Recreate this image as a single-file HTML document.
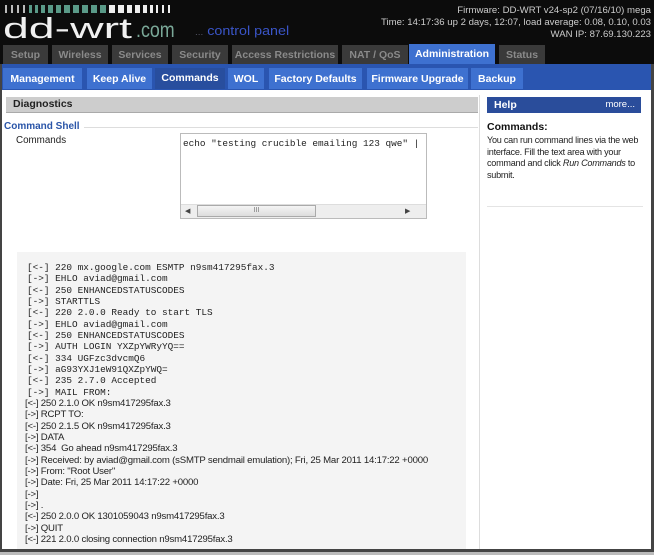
<!DOCTYPE html>
<html><head><meta charset="utf-8"><style>
*{margin:0;padding:0;box-sizing:border-box}
body{width:654px;height:555px;background:#fff;position:relative;overflow:hidden;font-family:"Liberation Sans",Tahoma,sans-serif;font-size:10px;color:#000}
.a{position:absolute}
#hdr{left:0;top:0;width:654px;height:64px;background:#0c0c0c}
.t1{position:absolute;top:45px;height:19px;background:#3a3a3a;color:#8a8a8a;font-weight:bold;font-size:10.5px;text-align:center;line-height:20px}
.t2{position:absolute;top:68px;height:21px;background:#3e71d0;color:#fff;font-weight:bold;font-size:10.5px;text-align:center;line-height:22px}
.mono{font-family:"Liberation Mono","Courier New",monospace;font-size:9.4px;color:#222}
.ln{position:absolute;left:27px;white-space:pre;line-height:11px}
.sn{position:absolute;left:25px;white-space:pre;font-size:9.6px;color:#222;line-height:11px;letter-spacing:-0.2px}
</style></head><body>
<div id="hdr" class="a"></div>
<div class="a" style="left:5px;top:5px;width:170px;height:8px">
<svg width="170" height="8">
<g fill="#bbb"><rect x="0" width="2" height="8"/><rect x="6" width="2" height="8"/><rect x="12" width="2" height="8"/><rect x="18" width="2" height="8"/></g>
<g fill="#5a9a88"><rect x="24" width="3" height="8"/><rect x="30" width="3" height="8"/><rect x="36" width="4" height="8"/><rect x="43" width="5" height="8"/><rect x="51" width="5" height="8"/><rect x="59" width="6" height="8"/><rect x="68" width="6" height="8"/><rect x="77" width="6" height="8"/><rect x="86" width="6" height="8"/><rect x="95" width="6" height="8"/></g>
<g fill="#eee"><rect x="104" width="6" height="8"/><rect x="113" width="6" height="8"/><rect x="122" width="5" height="8"/><rect x="130" width="5" height="8"/><rect x="138" width="4" height="8"/><rect x="145" width="3" height="8"/><rect x="151" width="2" height="8"/><rect x="157" width="2" height="8"/><rect x="163" width="2" height="8"/></g>
</svg></div>
<div class="a" style="left:3px;top:14px;font-size:29px;color:#f0f0f0;line-height:30px;transform:scaleX(1.6);transform-origin:0 0;white-space:nowrap">dd-wrt</div>
<div class="a" style="left:136px;top:20px;font-size:21px;color:#7aa898;line-height:22px;transform:scaleX(0.85);transform-origin:0 0">.com</div>
<div class="a" style="left:195px;top:23px;font-size:13px;color:#3a55c8;line-height:16px;white-space:nowrap;transform:scaleX(1.1);transform-origin:0 0"><span style="font-size:9px;color:#556">...</span> control panel</div>
<div class="a" style="right:3px;top:5px;text-align:right;color:#ccc;font-size:9.6px;line-height:12px">Firmware: DD-WRT v24-sp2 (07/16/10) mega<br>Time: 14:17:36 up 2 days, 12:07, load average: 0.08, 0.10, 0.03<br>WAN IP: 87.69.130.223</div>
<div class="t1" style="left:3px;width:45px">Setup</div>
<div class="t1" style="left:52px;width:56px">Wireless</div>
<div class="t1" style="left:112px;width:56px">Services</div>
<div class="t1" style="left:172px;width:56px">Security</div>
<div class="t1" style="left:232px;width:106px">Access Restrictions</div>
<div class="t1" style="left:342px;width:66px">NAT / QoS</div>
<div class="t1" style="left:409px;width:86px;background:#3e71d0;color:#fff;top:44px;height:20px">Administration</div>
<div class="t1" style="left:499px;width:46px">Status</div>
<div class="a" style="left:0;top:64px;width:654px;height:26px;background:#2a55b0"></div>
<div class="t2" style="left:3px;width:79px">Management</div>
<div class="t2" style="left:87px;width:65px">Keep Alive</div>
<div class="t2" style="left:155px;width:70px;background:#284e9e;line-height:20px">Commands</div>
<div class="t2" style="left:228px;width:36px">WOL</div>
<div class="t2" style="left:269px;width:93px">Factory Defaults</div>
<div class="t2" style="left:367px;width:101px">Firmware Upgrade</div>
<div class="t2" style="left:471px;width:52px">Backup</div>
<div class="a" style="left:6px;top:97px;width:472px;height:16px;background:#cdcdcd;border-bottom:1px solid #aaa;font-weight:bold;font-size:10.5px;line-height:15px;padding-left:7px;color:#222">Diagnostics</div>
<div class="a" style="left:487px;top:97px;width:154px;height:16px;background:#2a4d9b;color:#fff;font-weight:bold;font-size:10.5px;line-height:16px;padding-left:7px">Help<span style="position:absolute;right:6px;font-weight:normal;font-size:9.5px">more...</span></div>
<div class="a" style="left:479px;top:95px;width:1px;height:455px;background:#ddd"></div>
<div class="a" style="left:70px;top:127px;width:408px;height:1px;background:#ddd"></div>
<div class="a" style="left:4px;top:121px;color:#2a55a8;font-weight:bold;font-size:10px;background:#fff;padding-right:4px">Command Shell</div>
<div class="a" style="left:16px;top:135px;font-size:9.8px;color:#222">Commands</div>
<div class="a" style="left:180px;top:133px;width:247px;height:86px;border:1px solid #bbb;background:#fff">
<div class="mono" style="position:absolute;left:2px;top:4px;white-space:pre">echo "testing crucible emailing 123 qwe" |</div>
<div style="position:absolute;left:0;bottom:0;width:245px;height:14px;background:#eee;border-top:1px solid #ddd"></div>
<div style="position:absolute;left:16px;bottom:1px;width:119px;height:12px;background:linear-gradient(#f4f4f4,#ddd);border:1px solid #aaa;font-size:7px;text-align:center;color:#777;line-height:10px">III</div>
<div style="position:absolute;left:4px;bottom:3px;font-size:7px;color:#444">◀</div>
<div style="position:absolute;left:224px;bottom:3px;font-size:7px;color:#444">▶</div>
</div>
<div class="a" style="left:487px;top:121px;font-weight:bold;font-size:10.5px;color:#111">Commands:</div>
<div class="a" style="left:487px;top:135px;width:162px;font-size:9.1px;line-height:11.5px;color:#222;letter-spacing:-0.25px">You can run command lines via the web interface. Fill the text area with your command and click <i>Run Commands</i> to submit.</div>
<div class="a" style="left:487px;top:206px;width:156px;height:1px;background:#e4e4e4"></div>
<div class="a" style="left:17px;top:252px;width:449px;height:297px;background:#f4f4f4"></div>
<div class="mono">
<div class="ln" style="top:262px">[&lt;-] 220 mx.google.com ESMTP n9sm417295fax.3</div>
<div class="ln" style="top:273px">[-&gt;] EHLO aviad@gmail.com</div>
<div class="ln" style="top:285px">[&lt;-] 250 ENHANCEDSTATUSCODES</div>
<div class="ln" style="top:296px">[-&gt;] STARTTLS</div>
<div class="ln" style="top:307px">[&lt;-] 220 2.0.0 Ready to start TLS</div>
<div class="ln" style="top:319px">[-&gt;] EHLO aviad@gmail.com</div>
<div class="ln" style="top:330px">[&lt;-] 250 ENHANCEDSTATUSCODES</div>
<div class="ln" style="top:341px">[-&gt;] AUTH LOGIN YXZpYWRyYQ==</div>
<div class="ln" style="top:353px">[&lt;-] 334 UGFzc3dvcmQ6</div>
<div class="ln" style="top:364px">[-&gt;] aG93YXJ1eW91QXZpYWQ=</div>
<div class="ln" style="top:375px">[&lt;-] 235 2.7.0 Accepted</div>
<div class="ln" style="top:387px">[-&gt;] MAIL FROM:</div>
</div>
<div class="sn" style="top:398px">[&lt;-] 250 2.1.0 OK n9sm417295fax.3</div>
<div class="sn" style="top:409px">[-&gt;] RCPT TO:</div>
<div class="sn" style="top:421px">[&lt;-] 250 2.1.5 OK n9sm417295fax.3</div>
<div class="sn" style="top:432px">[-&gt;] DATA</div>
<div class="sn" style="top:443px">[&lt;-] 354  Go ahead n9sm417295fax.3</div>
<div class="sn" style="top:455px">[-&gt;] Received: by aviad@gmail.com (sSMTP sendmail emulation); Fri, 25 Mar 2011 14:17:22 +0000</div>
<div class="sn" style="top:466px">[-&gt;] From: "Root User"</div>
<div class="sn" style="top:477px">[-&gt;] Date: Fri, 25 Mar 2011 14:17:22 +0000</div>
<div class="sn" style="top:489px">[-&gt;]</div>
<div class="sn" style="top:500px">[-&gt;] .</div>
<div class="sn" style="top:511px">[&lt;-] 250 2.0.0 OK 1301059043 n9sm417295fax.3</div>
<div class="sn" style="top:523px">[-&gt;] QUIT</div>
<div class="sn" style="top:534px">[&lt;-] 221 2.0.0 closing connection n9sm417295fax.3</div>
<div class="a" style="left:0;top:64px;width:2px;height:488px;background:#444"></div>
<div class="a" style="left:651px;top:64px;width:3px;height:488px;background:#444"></div>
<div class="a" style="left:0;top:549px;width:654px;height:3px;background:#444"></div>
<div class="a" style="left:0;top:552px;width:654px;height:3px;background:#bbb"></div>
</body></html>
